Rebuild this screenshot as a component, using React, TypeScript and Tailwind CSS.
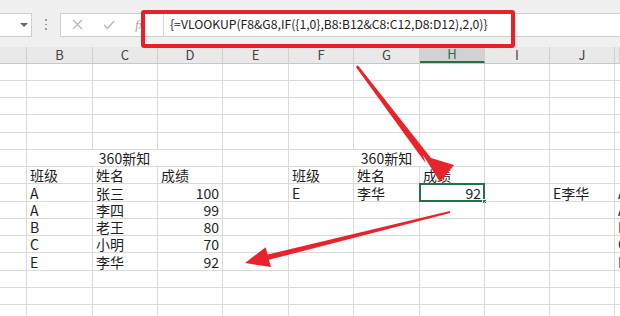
import clsx from "clsx";

type Cell = { t?: string; right?: boolean; center?: boolean; span3?: boolean; sel?: boolean };

const gridCols =
  "grid grid-cols-[27px_66px_65px_65px_66px_65px_66px_65px_65px_65px_1fr]";

const letters = ["", "B", "C", "D", "E", "F", "G", "H", "I", "J", ""];

// 表格数据 (第1行到第15行)
const e = (): Cell => ({});
const blank = (): Cell[] => Array.from({ length: 11 }, e);

const rows: Cell[][] = [
  blank(),
  blank(),
  blank(),
  blank(),
  blank(),
  [e(), { t: "360新知", span3: true, center: true }, e(), { t: "360新知", span3: true, center: true }, e(), e(), e()],
  [e(), { t: "班级" }, { t: "姓名" }, { t: "成绩" }, e(), { t: "班级" }, { t: "姓名" }, { t: "成绩" }, e(), e(), e()],
  [e(), { t: "A" }, { t: "张三" }, { t: "100", right: true }, e(), { t: "E" }, { t: "李华" }, { t: "92", right: true, sel: true }, e(), { t: "E李华" }, { t: "A张三" }],
  [e(), { t: "A" }, { t: "李四" }, { t: "99", right: true }, e(), e(), e(), e(), e(), e(), { t: "A李四" }],
  [e(), { t: "B" }, { t: "老王" }, { t: "80", right: true }, e(), e(), e(), e(), e(), e(), { t: "B老王" }],
  [e(), { t: "C" }, { t: "小明" }, { t: "70", right: true }, e(), e(), e(), e(), e(), e(), { t: "C小明" }],
  [e(), { t: "E" }, { t: "李华" }, { t: "92", right: true }, e(), e(), e(), e(), e(), e(), { t: "E李华" }],
  blank(),
  blank(),
  blank(),
];

function Arrows() {
  return (
    <svg className="pointer-events-none absolute left-0 top-0" width="620" height="316" viewBox="0 0 620 316">
      {/* 箭头1: 公式栏 -> H8 */}
      <polygon
        fill="#e8232b"
        points="355.9,66.9 357.9,65.2 431,158 454,165 440,182 423,155 425.5,163"
      />
      {/* 箭头2: H9 -> D12 */}
      <polygon
        fill="#e8232b"
        points="449.8,211 267.7,254.6 265.6,247.3 245,263 271,267 268.9,259.8 450.2,213"
      />
    </svg>
  );
}

export default function App() {
  return (
    <div className="relative h-[316px] w-[620px] overflow-hidden bg-white font-['Noto_Sans_CJK_SC',sans-serif]">
      {/* 名称框 + 编辑栏 */}
      <div className="flex h-[46.5px] items-start bg-[#f0f0f0] pt-[12.5px]">
        <div className="relative h-[24px] w-[32px] border border-l-0 border-[#cfcfcf] bg-white">
          <div className="absolute left-[20px] top-[9px] h-0 w-0 border-x-[4px] border-t-[4px] border-x-transparent border-t-[#666]" />
        </div>
        <div className="flex h-[24px] w-[28px] flex-col items-center justify-center gap-[3px]">
          <span className="h-[1.5px] w-[1.5px] bg-[#9a9a9a]" />
          <span className="h-[1.5px] w-[1.5px] bg-[#9a9a9a]" />
          <span className="h-[1.5px] w-[1.5px] bg-[#9a9a9a]" />
        </div>
        <div className="flex h-[24px] flex-1 border border-r-0 border-[#cfcfcf] bg-white">
          <div className="flex w-[102px] items-center pl-[1px]">
            <span className="flex w-[31px] justify-center">
              <svg width="11" height="11" viewBox="0 0 11 11">
                <path d="M1 1L10 10M10 1L1 10" stroke="#b5b5b5" strokeWidth="1.2" />
              </svg>
            </span>
            <span className="flex w-[31px] justify-center">
              <svg width="12" height="10" viewBox="0 0 12 10">
                <path d="M1 5L4.5 8.5L11 1" stroke="#b5b5b5" strokeWidth="1.2" fill="none" />
              </svg>
            </span>
            <span className="flex w-[31px] justify-center font-['Liberation_Serif',serif] text-[12px] italic text-[#9a9a9a]">
              fx
            </span>
          </div>
          <div className="flex flex-1 items-center border-l border-[#d8d8d8] pl-[6px] text-[12.2px] text-[#222]">
            {"{=VLOOKUP(F8&G8,IF({1,0},B8:B12&C8:C12,D8:D12),2,0)}"}
          </div>
        </div>
      </div>

      {/* 列标题 */}
      <div className={clsx(gridCols, "h-[17px] border-b border-[#c8c8c8] bg-[#e9e9e9]")}>
        {letters.map((l, i) => (
          <div
            key={i}
            className={clsx(
              "flex items-center justify-center border-r border-[#d0d0d0] text-[13px] leading-none",
              l === "H" ? "border-b-2 border-b-[#217346] bg-[#d2d2d2] text-[#217346]" : "text-[#444]"
            )}
          >
            {l}
          </div>
        ))}
      </div>

      {/* 单元格 */}
      {rows.map((row, ri) => (
        <div key={ri} className={clsx(gridCols, "h-[17.27px]")}>
          {row.map((c, ci) => (
            <div
              key={ci}
              className={clsx(
                "relative flex items-end whitespace-nowrap border-b border-r border-[#dadada] px-[3px] text-[14px] leading-[15px] text-[#1e1e1e]",
                c.right && "justify-end",
                c.center && "justify-center",
                c.span3 && "col-span-3"
              )}
            >
              {c.t}
              {c.sel && (
                <div className="absolute bottom-[-1px] left-[-1px] right-[-1px] top-[-1px] border-2 border-[#217346]">
                  <div className="absolute bottom-[-4px] right-[-4px] h-[5px] w-[5px] border border-white bg-[#217346]" />
                </div>
              )}
            </div>
          ))}
        </div>
      ))}

      {/* 红框 */}
      <div className="absolute left-[141px] top-[10px] h-[38px] w-[374px] rounded-[3px] border-[4px] border-[#e8202a]" />
      <Arrows />
    </div>
  );
}
